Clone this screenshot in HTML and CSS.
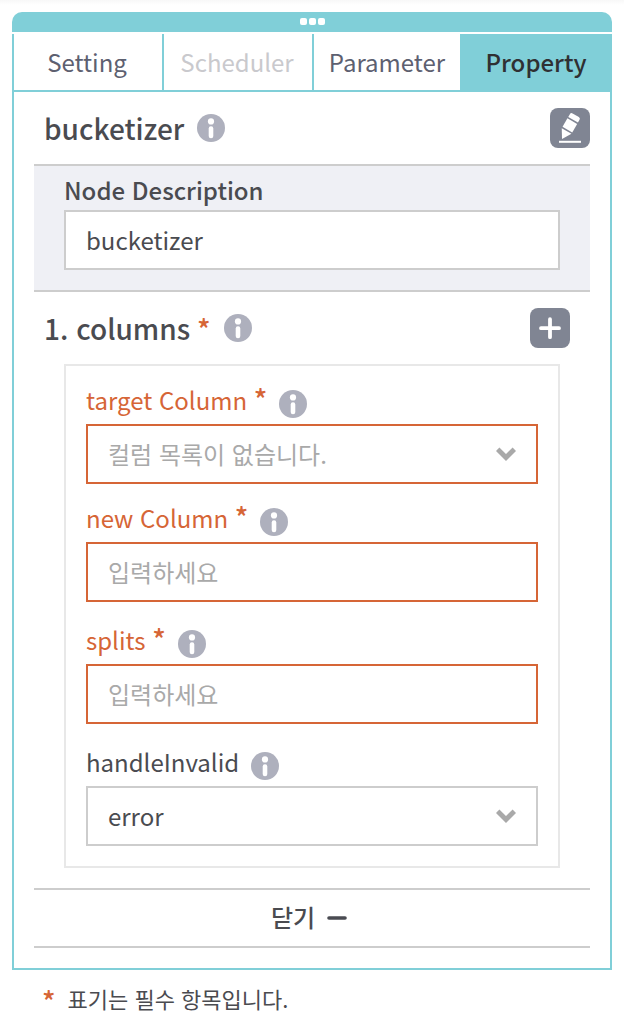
FILE: index.html
```html
<!DOCTYPE html>
<html lang="ko">
<head>
<meta charset="utf-8">
<meta name="viewport" content="width=device-width, initial-scale=1">
<title>bucketizer</title>
<link rel="stylesheet" href="styles.css">
</head>
<body>
<svg class="sprite" aria-hidden="true">
  <symbol id="icon-info" viewBox="0 0 28 28">
    <circle cx="14" cy="14" r="14" fill="#aeb0bd"/>
    <circle cx="14" cy="7.4" r="3.1" fill="#fff"/>
    <rect x="11.7" y="12.2" width="4.6" height="12" rx="2.2" fill="#fff"/>
  </symbol>
  <symbol id="icon-chevron" viewBox="0 0 18 12">
    <path d="M1.500 1.700 9 9.200l7.500-7.500" fill="none" stroke="#a9a9a9" stroke-width="4.400"/>
  </symbol>
</svg>
<main class="panel">
  <div class="panel-handle"><i class="dot"></i><i class="dot"></i><i class="dot"></i></div>
  <nav class="tabs">
    <button type="button" class="tab">Setting</button>
    <button type="button" class="tab tab-disabled" disabled>Scheduler</button>
    <button type="button" class="tab">Parameter</button>
    <button type="button" class="tab tab-active">Property</button>
  </nav>
  <div class="panel-body">
    <header class="heading">
      <h1 class="title">bucketizer</h1>
      <svg class="info"><use href="#icon-info"/></svg>
      <button type="button" class="square" aria-label="Edit">
        <svg class="square-icon" viewBox="0 0 40 40">
          <g transform="translate(12 31) rotate(30)" fill="#fff">
            <path d="M0 0-5.600-9.200H5.600Z"/>
            <path d="M-5.600-10.800H5.600V-20.600H-5.600Z"/>
            <path d="M-5.600-22.200H5.600V-25.400Q5.600-27.400 3.600-27.400H-3.600Q-5.600-27.400-5.600-25.400Z"/>
          </g>
          <path d="M9 32.800h22v2H9z" fill="#fff"/>
        </svg>
      </button>
    </header>
    <section class="description">
      <label class="description-label" for="desc">Node Description</label>
      <input class="control" id="desc" type="text" value="bucketizer">
    </section>
    <header class="heading heading-group">
      <h2 class="title">1. columns <span class="required">*</span></h2>
      <svg class="info"><use href="#icon-info"/></svg>
      <button type="button" class="square" aria-label="Add">
        <svg class="square-icon" viewBox="0 0 40 40"><path d="M11 20.200H29M20 11.200v18" stroke="#fff" stroke-width="3.800" stroke-linecap="round"/></svg>
      </button>
    </header>
    <section class="group">
      <div class="field invalid">
        <div class="field-head"><label for="target">target Column <span class="required">*</span></label><svg class="info"><use href="#icon-info"/></svg></div>
        <div class="select">
          <select class="control empty" id="target"><option>컬럼 목록이 없습니다.</option></select>
          <svg class="chevron"><use href="#icon-chevron"/></svg>
        </div>
      </div>
      <div class="field field-text invalid">
        <div class="field-head"><label for="new">new Column <span class="required">*</span></label><svg class="info"><use href="#icon-info"/></svg></div>
        <input class="control" id="new" type="text" placeholder="입력하세요">
      </div>
      <div class="field field-text invalid">
        <div class="field-head"><label for="splits">splits <span class="required">*</span></label><svg class="info"><use href="#icon-info"/></svg></div>
        <input class="control" id="splits" type="text" placeholder="입력하세요">
      </div>
      <div class="field">
        <div class="field-head"><label for="handle">handleInvalid</label><svg class="info"><use href="#icon-info"/></svg></div>
        <div class="select">
          <select class="control" id="handle"><option>error</option></select>
          <svg class="chevron"><use href="#icon-chevron"/></svg>
        </div>
      </div>
    </section>
    <button type="button" class="close">닫기
      <svg class="minus" viewBox="0 0 20 4"><path d="M2 2h16" stroke="#4a4b52" stroke-width="3.600" stroke-linecap="round"/></svg>
    </button>
  </div>
</main>
<p class="note"><span class="required">*</span>표기는 필수 항목입니다.</p>
</body>
</html>
```

FILE: styles.css
```css
* { box-sizing: border-box; }

body {
  margin: 0;
  padding: 12px;
  background: linear-gradient(#f8f8f8, #fff 5px) no-repeat;
  color: #4a4b50;
  font-family: "Noto Sans CJK KR", sans-serif;
  font-size: 24px;
}

button, input, select { font: inherit; color: inherit; }
button { cursor: pointer; }
svg { display: block; flex: none; }
.sprite { position: absolute; width: 0; height: 0; }

.panel-handle {
  display: flex;
  justify-content: center;
  gap: 2px;
  height: 20px;
  padding-top: 6px;
  border-radius: 10px 10px 0 0;
  background: #80cfd8;
}

.dot { width: 7px; height: 7px; border-radius: 2px; background: #fff; }

.tabs {
  display: grid;
  grid-template-columns: repeat(4, 1fr);
  margin-top: 2px;
  border-bottom: 2px solid #80cfd8;
}

.tab {
  height: 56px;
  padding: 0 2px 2px 0;
  border: 0;
  border-left: 2px solid #80cfd8;
  background: none;
  color: #5d6070;
}

.tab-disabled { color: #c9c9cd; }

.tab-active {
  margin-left: -2px;
  background: #80cfd8;
  color: #2f3033;
  font-weight: 500;
}

.panel-body {
  padding: 0 20px 20px;
  border: 2px solid #80cfd8;
  border-top: 0;
}

.heading { display: flex; align-items: center; gap: 13px; height: 72px; padding-left: 10px; }
.heading-group { padding-right: 20px; }
.title { margin: 0; font-size: 28px; line-height: 40px; font-weight: 500; }
.required { color: #d66536; font-size: 28px; line-height: 1; font-weight: 500; }
.title .required { margin-left: -1px; }

.info { width: 28px; height: 28px; }

.square {
  width: 40px;
  height: 40px;
  margin-left: auto;
  padding: 0;
  border: 0;
  border-radius: 8px;
  background: #808593;
}

.square-icon { width: 40px; height: 40px; }

.description {
  padding: 6px 30px 20px;
  border: solid #cdcdcd;
  border-width: 2px 0;
  background: #eff0f5;
}

.description-label { display: block; height: 38px; line-height: 36px; font-weight: 500; }

.control {
  display: block;
  width: 100%;
  height: 60px;
  padding: 0 20px 2px;
  border: 2px solid #cdcdcd;
  border-radius: 0;
  outline: 0;
  background: #fff;
  appearance: none;
}

.control::placeholder { color: #a9a9a9; opacity: 1; }
.empty { color: #a9a9a9; }
.invalid .control { border-color: #d66536; }
.invalid label { color: #d66536; }

.group { margin: 0 30px 20px; padding: 0 20px 20px; border: 2px solid #e8e8e8; }
.field-text { padding-bottom: 4px; }
.field-head { display: flex; height: 58px; padding-top: 16px; line-height: 36px; }
.field-head .info { margin: 8px 0 0 12px; }

.select { display: grid; align-items: center; }
.select > * { grid-area: 1 / 1; }
.chevron { width: 20px; height: 14px; margin-right: 22px; justify-self: end; pointer-events: none; }

.close {
  display: flex;
  align-items: center;
  justify-content: center;
  gap: 12px;
  width: 100%;
  height: 60px;
  padding: 0 6px 4px 0;
  border: solid #cdcdcd;
  border-width: 2px 0;
  background: none;
  font-weight: 500;
}

.minus { width: 20px; height: 4px; margin-top: 4px; }

.note {
  display: flex;
  gap: 12px;
  margin: 0;
  padding: 12px 30px 0;
  font-size: 22px;
  line-height: 32px;
}

.note .required { line-height: 36px; }
```
